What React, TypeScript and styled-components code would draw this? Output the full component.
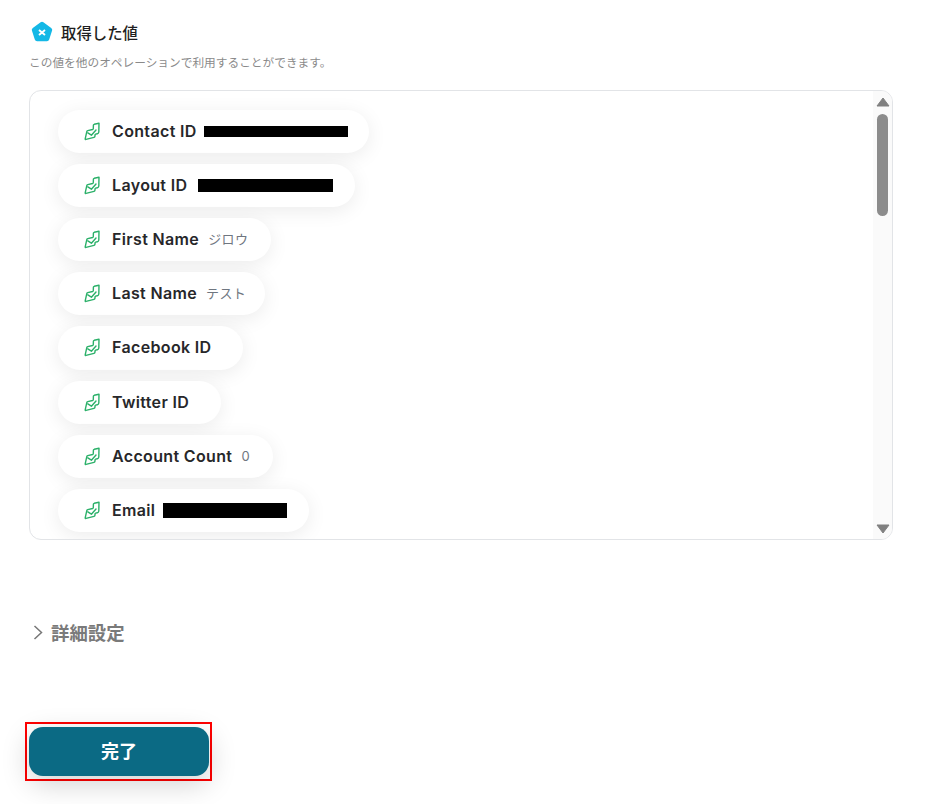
import React from 'react';
import styled, { createGlobalStyle } from 'styled-components';

const GlobalStyle = createGlobalStyle`
  html, body {
    margin: 0;
    padding: 0;
    background: #fff;
    font-family: Inter, "Noto Sans CJK JP", sans-serif;
  }
`;

const Page = styled.div`
  width: 930px;
  height: 804px;
  box-sizing: border-box;
  padding: 19px 37px 0 29px;
  overflow: hidden;
`;

const TitleRow = styled.div`
  display: flex;
  align-items: center;
  gap: 8px;
  height: 26px;
  padding-left: 2px;
`;

const Title = styled.h2`
  margin: 0;
  font-size: 15.4px;
  font-weight: 500;
  color: #1f1f22;
`;

const Description = styled.p`
  margin: 9px 0 0;
  height: 18px;
  line-height: 18px;
  font-size: 11.7px;
  color: #8a8a8a;
`;

const ValuesBox = styled.div`
  display: flex;
  height: 450px;
  margin-top: 18px;
  box-sizing: border-box;
  border: 1px solid #e2e4e7;
  border-radius: 12px;
  overflow: hidden;
`;

const ValueList = styled.div`
  flex: 1;
  display: flex;
  flex-direction: column;
  align-items: flex-start;
  gap: 11px;
  padding: 18.9px 0 0 28px;
  overflow: hidden;
`;

const Pill = styled.div<{ $width: number }>`
  display: flex;
  align-items: center;
  flex: none;
  width: ${(p) => p.$width}px;
  height: 43.14px;
  box-sizing: border-box;
  padding-left: 26px;
  border-radius: 22px;
  background: #fff;
  box-shadow: 0 4px 20px rgba(0, 0, 0, 0.08);
`;

const Label = styled.span`
  margin-left: 12px;
  font-size: 16px;
  line-height: 21px;
  font-weight: 600;
  letter-spacing: 0.35px;
  color: #27272a;
  white-space: nowrap;
`;

const Sample = styled.span`
  margin-left: 9px;
  font-size: 13px;
  line-height: 21px;
  letter-spacing: 0.4px;
  color: #6f7680;
  white-space: nowrap;
`;

const Redaction = styled.span<{ $width: number; $gap: number; $height: number }>`
  width: ${(p) => p.$width}px;
  height: ${(p) => p.$height}px;
  margin-left: ${(p) => p.$gap}px;
  background: #000;
`;

const ScrollTrack = styled.div`
  flex: none;
  width: 19px;
  display: flex;
  flex-direction: column;
  align-items: center;
  background: #fafafa;
  padding: 6px 0 5px;
  box-sizing: border-box;
`;

const ScrollThumb = styled.div`
  width: 11px;
  height: 102px;
  margin-top: 7px;
  border-radius: 6px;
  background: #8c8c8c;
`;

const ScrollSpacer = styled.div`
  flex: 1;
`;

const DetailsRow = styled.div`
  display: flex;
  align-items: center;
  gap: 8px;
  margin-top: 78px;
  height: 28px;
  padding-left: 4px;
`;

const DetailsLabel = styled.span`
  font-size: 18.4px;
  font-weight: 600;
  color: #7a7a7a;
`;

const Highlight = styled.div`
  display: inline-flex;
  margin: 76px 0 0 -4px;
  padding: 3px 1px 3px 2px;
  border: 2px solid #f00;
`;

const DoneButton = styled.button`
  width: 180px;
  height: 49px;
  padding: 0 0 3px;
  border: 0;
  border-radius: 14px;
  background: #0b6a84;
  color: #fff;
  font-family: inherit;
  font-size: 18px;
  font-weight: 700;
  box-shadow: 0 8px 28px rgba(0, 0, 0, 0.18);
`;

const PentagonIcon = () => (
  <svg width="22" height="22" viewBox="0 0 22 22">
    <path
      d="M9.6 1.2a2.4 2.4 0 0 1 2.8 0l7.8 5.7a2.4 2.4 0 0 1 .9 2.7l-2.9 9a2.4 2.4 0 0 1-2.3 1.7H6.1a2.4 2.4 0 0 1-2.3-1.7l-2.9-9a2.4 2.4 0 0 1 .9-2.7z"
      fill="#14b8e6"
    />
    <path d="M8 9 14 14M14 9 8 14" stroke="#fff" strokeWidth="1.9" />
  </svg>
);

const ValueIcon = () => (
  <svg width="16" height="19" viewBox="0 0 16 19" fill="none" stroke="#2bb069" strokeWidth="1.4" strokeLinejoin="round" strokeLinecap="round">
    <path d="M15 1.2 14.8 10Q14.7 11.4 13.4 11.7L11.6 12.1Q11.2 12.2 11.1 12.7L10.9 14.4Q10.8 15.2 10 15.4L2 17.4Q1.1 17.6 1.2 16.8L2.8 9.6Q2.9 8.8 3.7 8.6L8.6 7.5Q9.3 7.3 9.3 6.6L9.4 3.2Q9.5 2.5 10.2 2.3z" />
    <path d="M3.8 10.8 7.4 13.2 12 8" />
  </svg>
);

const ArrowUp = () => (
  <svg width="14" height="10" viewBox="0 0 14 10">
    <path d="M7 1 13 9H1z" fill="#808080" stroke="#808080" strokeLinejoin="round" />
  </svg>
);

const ArrowDown = () => (
  <svg width="14" height="10" viewBox="0 0 14 10">
    <path d="M1 1H13L7 9z" fill="#808080" stroke="#808080" strokeLinejoin="round" />
  </svg>
);

const Chevron = () => (
  <svg width="10" height="15" viewBox="0 0 10 15" fill="none" stroke="#777" strokeWidth="1.5">
    <path d="M1.5 1 8.5 7.5 1.5 14" />
  </svg>
);

type Row = {
  label: string;
  width: number;
  sample?: string;
  redaction?: { width: number; gap: number; height: number };
};

const rows: Row[] = [
  { label: 'Contact ID', width: 311, redaction: { width: 144, gap: 7, height: 11 } },
  { label: 'Layout ID', width: 297, redaction: { width: 135, gap: 11, height: 13 } },
  { label: 'First Name', width: 213, sample: 'ジロウ' },
  { label: 'Last Name', width: 207, sample: 'テスト' },
  { label: 'Facebook ID', width: 185 },
  { label: 'Twitter ID', width: 163 },
  { label: 'Account Count', width: 215, sample: '0' },
  { label: 'Email', width: 251, redaction: { width: 124, gap: 8, height: 15 } },
];

function App() {
  return (
    <>
      <GlobalStyle />
      <Page>
        <TitleRow>
          <PentagonIcon />
          <Title>取得した値</Title>
        </TitleRow>
        <Description>この値を他のオペレーションで利用することができます。</Description>
        <ValuesBox>
          <ValueList>
            {rows.map((row) => (
              <Pill key={row.label} $width={row.width}>
                <ValueIcon />
                <Label>{row.label}</Label>
                {row.sample && <Sample>{row.sample}</Sample>}
                {row.redaction && (
                  <Redaction
                    $width={row.redaction.width}
                    $gap={row.redaction.gap}
                    $height={row.redaction.height}
                  />
                )}
              </Pill>
            ))}
          </ValueList>
          <ScrollTrack>
            <ArrowUp />
            <ScrollThumb />
            <ScrollSpacer />
            <ArrowDown />
          </ScrollTrack>
        </ValuesBox>
        <DetailsRow>
          <Chevron />
          <DetailsLabel>詳細設定</DetailsLabel>
        </DetailsRow>
        <Highlight>
          <DoneButton>完了</DoneButton>
        </Highlight>
      </Page>
    </>
  );
}

export default App;
